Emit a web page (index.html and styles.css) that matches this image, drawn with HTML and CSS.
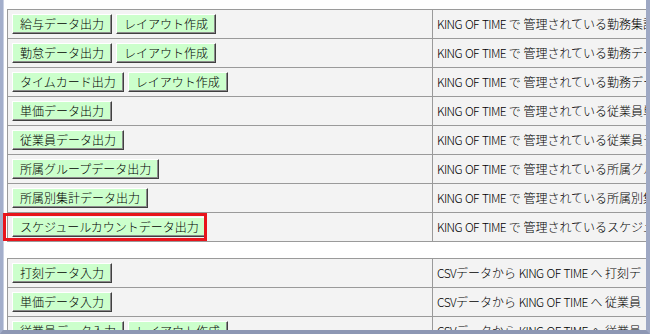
FILE: index.html
```html
<!DOCTYPE html>
<html lang="ja">
<head>
  <meta charset="UTF-8" />
  <title>データ入出力</title>
  <link rel="stylesheet" href="styles.css">
</head>
<body>
  <div class="window">
    <div class="page">
      <!-- 出力メニュー -->
      <table class="menu">
        <colgroup><col class="col-act"><col class="col-desc"></colgroup>
        <tr>
          <td><div class="acts"><button>給与データ出力</button><button>レイアウト作成</button></div></td>
          <td class="desc"><span class="en">KING OF TIME</span> で 管理されている勤務集計</td>
        </tr>
        <tr>
          <td><div class="acts"><button>勤怠データ出力</button><button>レイアウト作成</button></div></td>
          <td class="desc"><span class="en">KING OF TIME</span> で 管理されている勤務デー</td>
        </tr>
        <tr>
          <td><div class="acts"><button>タイムカード出力</button><button>レイアウト作成</button></div></td>
          <td class="desc"><span class="en">KING OF TIME</span> で 管理されている勤務デー</td>
        </tr>
        <tr>
          <td><div class="acts"><button>単価データ出力</button></div></td>
          <td class="desc"><span class="en">KING OF TIME</span> で 管理されている従業員単</td>
        </tr>
        <tr>
          <td><div class="acts"><button>従業員データ出力</button></div></td>
          <td class="desc"><span class="en">KING OF TIME</span> で 管理されている従業員デ</td>
        </tr>
        <tr>
          <td><div class="acts"><button>所属グループデータ出力</button></div></td>
          <td class="desc"><span class="en">KING OF TIME</span> で 管理されている所属グル</td>
        </tr>
        <tr>
          <td><div class="acts"><button>所属別集計データ出力</button></div></td>
          <td class="desc"><span class="en">KING OF TIME</span> で 管理されている所属別集</td>
        </tr>
        <tr>
          <td><div class="acts"><button>スケジュールカウントデータ出力</button></div></td>
          <td class="desc"><span class="en">KING OF TIME</span> で 管理されているスケジュ</td>
        </tr>
      </table>

      <!-- 入力メニュー -->
      <table class="menu">
        <colgroup><col class="col-act"><col class="col-desc"></colgroup>
        <tr>
          <td><div class="acts"><button>打刻データ入力</button></div></td>
          <td class="desc"><span class="en">CSV</span>データから <span class="en">KING OF TIME</span> へ 打刻デ</td>
        </tr>
        <tr>
          <td><div class="acts"><button>単価データ入力</button></div></td>
          <td class="desc"><span class="en">CSV</span>データから <span class="en">KING OF TIME</span> へ 従業員</td>
        </tr>
        <tr>
          <td><div class="acts"><button>従業員データ入力</button><button>レイアウト作成</button></div></td>
          <td class="desc"><span class="en">CSV</span>データから <span class="en">KING OF TIME</span> へ 従業員</td>
        </tr>
      </table>

      <div class="highlight"></div>
    </div>
  </div>
</body>
</html>
```

FILE: styles.css
```css
* {
  margin: 0;
  padding: 0;
  box-sizing: border-box;
  font-family: "Noto Sans CJK JP", sans-serif;
}
body {
  background: #ffffff;
  color: #000000;
  font-size: 12px;
}
.window {
  width: 650px;
  height: 334px;
  overflow: hidden;
  border-left: 3px solid #a3aecb;
  border-right: 4px solid #9ea8c4;
  border-bottom: 4px solid #8d97b4;
  box-shadow: inset 1px 0 0 #c9d0e2;
}
.page {
  position: relative;
  height: 100%;
  padding: 9px 0 0 4px;
}
.menu {
  border-collapse: collapse;
  table-layout: fixed;
  width: 700px;
  background: #f3f3f3;
  border: 1px solid #6e6e6e;
}
.menu + .menu {
  margin-top: 16px;
}
.col-act {
  width: 425px;
}
.col-desc {
  width: 275px;
}
.menu td {
  border: 1px solid #9a9a9a;
  padding: 4px;
  vertical-align: middle;
  line-height: 16px;
  white-space: nowrap;
  overflow: hidden;
  font-weight: 300;
}
.en {
  letter-spacing: -0.6px;
  word-spacing: 1px;
}
.acts {
  display: flex;
  gap: 4px;
}
button {
  height: 20px;
  padding: 0 7px;
  font-size: 12px;
  font-weight: 300;
  line-height: 16px;
  background: #ccffcc;
  color: #000000;
  border: 1px solid;
  border-color: #ffffff #404040 #404040 #ffffff;
  box-shadow: inset -1px -1px 0 #8c8c8c;
  cursor: pointer;
}
.highlight {
  position: absolute;
  left: 0;
  top: 213px;
  width: 204px;
  height: 28px;
  border: 3px solid #e8141b;
}
```
